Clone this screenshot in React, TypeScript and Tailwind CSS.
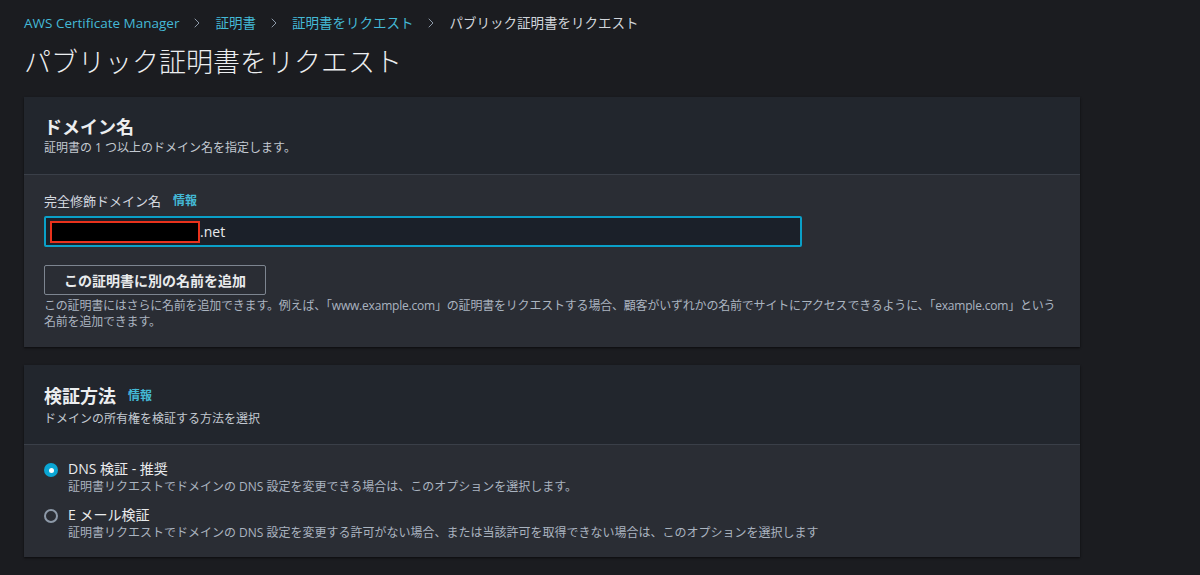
import { ChevronRight } from 'lucide-react';

const font = { fontFamily: '"Open Sans", "Noto Sans CJK JP", sans-serif' };

function Crumb({ label, link }: { label: string; link?: boolean }) {
  return (
    <span className={link ? 'text-[#44b9d6]' : 'text-[#d1d5db]'}>{label}</span>
  );
}

function Info() {
  return <span className="ml-3 text-[12px] font-bold text-[#44b9d6]">情報</span>;
}

function Radio({ checked, label, desc }: { checked?: boolean; label: string; desc: string }) {
  return (
    <div className="flex items-start gap-[10px]">
      <div className="pt-[4px]">
        {checked ? (
          <div className="flex h-[14px] w-[14px] items-center justify-center rounded-full bg-[#0aa6d4]">
            <div className="h-[5px] w-[5px] rounded-full bg-white" />
          </div>
        ) : (
          <div className="h-[14px] w-[14px] rounded-full border-2 border-[#8d99a8]" />
        )}
      </div>
      <div>
        <div className="text-[14px] leading-[20px] text-[#e9ebed]">{label}</div>
        <div className="text-[12px] leading-[16px] text-[#aab4c0]">{desc}</div>
      </div>
    </div>
  );
}

export default function App() {
  return (
    <div className="min-h-[575px] bg-[#1b1c20] pl-6 pr-[120px]" style={font}>
      <div className="flex items-center gap-[10px] pt-[14px] text-[13.5px] leading-[18px]">
        <Crumb label="AWS Certificate Manager" link />
        <ChevronRight className="h-4 w-4 text-[#8d99a8]" strokeWidth={1.5} />
        <Crumb label="証明書" link />
        <ChevronRight className="h-4 w-4 text-[#8d99a8]" strokeWidth={1.5} />
        <Crumb label="証明書をリクエスト" link />
        <ChevronRight className="h-4 w-4 text-[#8d99a8]" strokeWidth={1.5} />
        <Crumb label="パブリック証明書をリクエスト" />
      </div>
      <h1 className="mt-[10px] text-[27px] font-light leading-[40px] text-[#eceef0]">
        パブリック証明書をリクエスト
      </h1>

      <div className="mt-[15px] w-[1056px] bg-[#2a2d34] shadow-[0_1px_2px_rgba(0,0,0,0.6)]">
        <div className="border-b border-[#3a3f48] bg-[#22262d] px-5 pb-[18px] pt-[17px]">
          <h2 className="text-[18px] font-bold leading-[26px] text-[#eceef0]">ドメイン名</h2>
          <p className="text-[12px] leading-[16px] text-[#c3c9d1]">証明書の 1 つ以上のドメイン名を指定します。</p>
        </div>
        <div className="px-5 pb-[17px] pt-[16px]">
          <div className="flex items-center text-[13px] leading-[20px] text-[#d5dae0]">
            完全修飾ドメイン名
            <Info />
          </div>
          <div className="mt-[5px] flex h-[31px] w-[758px] items-center rounded-[2px] border-2 border-[#0aa0c8] bg-[#1b2029] pl-[4px] text-[14px] text-[#e9ebed]">
            <div className="h-[22px] w-[150px] border-2 border-[#e8321c] bg-black" />
            <span>.net</span>
          </div>
          <button className="mt-[18px] flex h-[30px] w-[222px] items-center justify-center rounded-[2px] border border-[#7d8590] text-[14px] font-bold text-[#e9ebed]">
            この証明書に別の名前を追加
          </button>
          <p className="mt-[3px] text-[12px] leading-[16px] tracking-[-0.2px] text-[#aab4c0]">
            <span className="whitespace-nowrap">
              この証明書にはさらに名前を追加できます。例えば、「www.example.com」の証明書をリクエストする場合、顧客がいずれかの名前でサイトにアクセスできるように、「example.com」という
            </span>
            <br />
            名前を追加できます。
          </p>
        </div>
      </div>

      <div className="mt-[18px] w-[1056px] bg-[#2a2d34] shadow-[0_1px_2px_rgba(0,0,0,0.6)]">
        <div className="border-b border-[#3a3f48] bg-[#22262d] px-5 pb-[17px] pt-[18px]">
          <h2 className="flex items-center text-[18px] font-bold leading-[26px] text-[#eceef0]">
            検証方法
            <Info />
          </h2>
          <p className="mt-[2px] text-[12px] leading-[16px] text-[#c3c9d1]">ドメインの所有権を検証する方法を選択</p>
        </div>
        <div className="flex flex-col gap-[10px] px-5 pb-[16px] pt-[14px]">
          <Radio
            checked
            label="DNS 検証 - 推奨"
            desc="証明書リクエストでドメインの DNS 設定を変更できる場合は、このオプションを選択します。"
          />
          <Radio
            label="E メール検証"
            desc="証明書リクエストでドメインの DNS 設定を変更する許可がない場合、または当該許可を取得できない場合は、このオプションを選択します"
          />
        </div>
      </div>
    </div>
  );
}
